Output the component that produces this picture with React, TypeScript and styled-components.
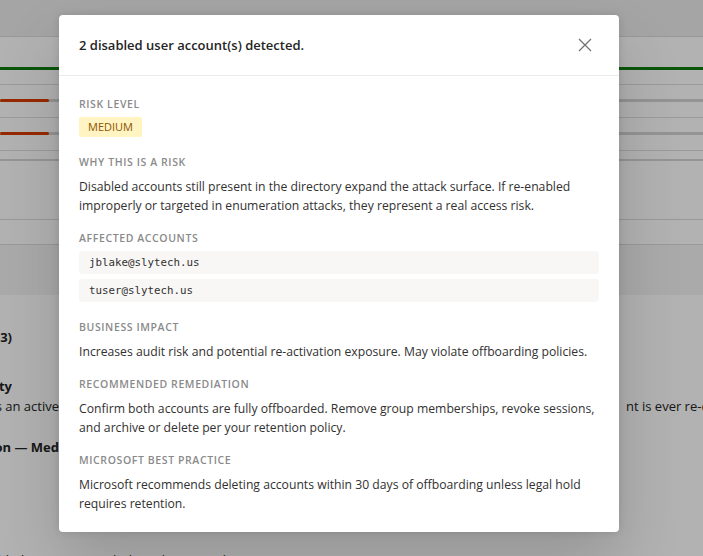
import styled, { createGlobalStyle } from 'styled-components'

const GlobalStyle = createGlobalStyle`
    html, body {
        margin: 0;
        padding: 0;
        height: 100%;
        overflow: hidden;
    }
    body {
        font-family: "Open Sans", "Noto Sans", sans-serif;
        color: #242424;
        background: #ffffff;
    }
`

const accounts = ['jblake@slytech.us', 'tuser@slytech.us']

export default function App() {
    return (
        <>
            <GlobalStyle />
            <Page>
                <BackgroundPage />
                <Overlay>
                    <Dialog />
                </Overlay>
            </Page>
        </>
    )
}

const Page = styled.div`
    position: relative;
    width: 100%;
    height: 556px;
    overflow: hidden;
    background: #ffffff;
`

// the page behind the dialog: only scraps of it show past the dialog edges
const BackgroundPage = styled(({ className }) => {
    return (
        <div className={className}>
            <TopBar />
            <GreenRule />
            <TableHead />
            <DataRow><Track><Fill $pct={7} /></Track></DataRow>
            <DataRow><Track><Fill $pct={7} /></Track></DataRow>
            <ThickRule />
            <PlainRow $height={58} />
            <PlainRow $height={24} />
            <GreyBand />
            <Copy>
                <Line $top={32} $bold>
                    <Tail $end={12}>Disabled Accounts (3)</Tail>
                </Line>
                <Line $top={29} $bold>
                    <Tail $end={12}>Security</Tail>
                </Line>
                <Line $top={0}>
                    <Tail $end={59}>Each stale account is an active</Tail>
                    <span />
                    <Head>nt is ever re-enabled</Head>
                </Line>
                <Line $top={21} $bold>
                    <Tail $end={59}>Recommendation — Med</Tail>
                </Line>
                <Line $top={93}>
                    <Tail $end={250}>Review disabled accounts regularly and remove them</Tail>
                </Line>
            </Copy>
        </div>
    )
})`
    display: flex;
    flex-direction: column;
`

const TopBar = styled.div`
    height: 36px;
    background: #ececec;
    border-bottom: 1px solid #dcdcdc;
`

const GreenRule = styled.div`
    margin-top: 30px;
    height: 3px;
    background: #107c10;
`

const TableHead = styled.div`
    height: 14px;
    border-bottom: 1px solid #dedede;
`

const DataRow = styled.div`
    height: 33px;
    padding-top: 14px;
    box-sizing: border-box;
    border-bottom: 1px solid #dedede;
`

const Track = styled.div`
    height: 3px;
    background: #d4d4d4;
`

const Fill = styled.div<{ $pct: number }>`
    width: ${p => p.$pct}%;
    height: 100%;
    background: #d83b01;
    border-radius: 2px;
`

const ThickRule = styled.div`
    margin-top: 8px;
    height: 2px;
    background: #d6d6d6;
`

const PlainRow = styled.div<{ $height: number }>`
    height: ${p => p.$height}px;
    border-bottom: 1px solid #dcdcdc;
`

const GreyBand = styled.div`
    height: 50px;
    background: #f4f4f4;
`

const Copy = styled.div`
    display: flex;
    flex-direction: column;
    font-size: 13px;
    line-height: 20px;
    color: #242424;
`

const Line = styled.div<{ $top: number; $bold?: boolean }>`
    display: grid;
    grid-template-columns: 59px 1fr 77px;
    margin-top: ${p => p.$top}px;
    font-weight: ${p => (p.$bold ? 700 : 400)};
    white-space: nowrap;
    height: 20px;
`

const Tail = styled.div<{ $end: number }>`
    width: ${p => p.$end}px;
    display: flex;
    justify-content: flex-end;
    overflow: hidden;
`

const Head = styled.div`
    overflow: hidden;
`

const Overlay = styled.div`
    position: absolute;
    inset: 0;
    background: rgba(0, 0, 0, 0.3);
    display: flex;
    align-items: flex-start;
    padding: 15px 0 0 59px;
`

const Dialog = styled(({ className }) => {
    return (
        <div className={className}>
            <DialogHeader>
                <Title>2 disabled user account(s) detected.</Title>
                <CloseButton aria-label="Close">
                    <svg width="14" height="14" viewBox="0 0 14 14">
                        <path d="M1 1 L13 13 M13 1 L1 13" stroke="#6f6f6f" strokeWidth="1.2" fill="none" />
                    </svg>
                </CloseButton>
            </DialogHeader>
            <DialogBody>
                <Section>
                    <Label>Risk level</Label>
                    <Badge>MEDIUM</Badge>
                </Section>
                <Section>
                    <Label>Why this is a risk</Label>
                    <Para>
                        Disabled accounts still present in the directory expand the attack surface. If re-enabled
                        improperly or targeted in enumeration attacks, they represent a real access risk.
                    </Para>
                </Section>
                <Section>
                    <Label>Affected accounts</Label>
                    <AccountList>
                        {accounts.map(a => (
                            <Account key={a}>{a}</Account>
                        ))}
                    </AccountList>
                </Section>
                <Section>
                    <Label>Business impact</Label>
                    <Para>Increases audit risk and potential re-activation exposure. May violate offboarding policies.</Para>
                </Section>
                <Section>
                    <Label>Recommended remediation</Label>
                    <Para>
                        Confirm both accounts are fully offboarded. Remove group memberships, revoke sessions,
                        and archive or delete per your retention policy.
                    </Para>
                </Section>
                <Section>
                    <Label>Microsoft best practice</Label>
                    <Para>
                        Microsoft recommends deleting accounts within 30 days of offboarding unless legal hold
                        requires retention.
                    </Para>
                </Section>
            </DialogBody>
        </div>
    )
})`
    width: 560px;
    background: #ffffff;
    border-radius: 4px;
    box-shadow: 0 0 8px rgba(0, 0, 0, 0.12), 0 32px 64px rgba(0, 0, 0, 0.16);
    display: flex;
    flex-direction: column;
`

const DialogHeader = styled.div`
    display: flex;
    align-items: center;
    justify-content: space-between;
    padding: 20px 27px 20px 20px;
    border-bottom: 1px solid #ebebeb;
`

const Title = styled.h2`
    margin: 0;
    font-size: 13px;
    line-height: 20px;
    font-weight: 600;
    color: #242424;
`

const CloseButton = styled.button`
    display: flex;
    padding: 0;
    border: none;
    background: transparent;
    cursor: pointer;
`

const DialogBody = styled.div`
    display: flex;
    flex-direction: column;
    gap: 15px;
    padding: 20px 20px 19px;
`

const Section = styled.div`
    display: flex;
    flex-direction: column;
    align-items: flex-start;
`

const Label = styled.div`
    font-size: 10.5px;
    line-height: 16px;
    font-weight: 600;
    letter-spacing: 0.6px;
    text-transform: uppercase;
    color: #8a8a8a;
    margin-bottom: 5px;
`

const Badge = styled.span`
    display: inline-block;
    margin-bottom: 2px;
    padding: 0 9px;
    height: 20px;
    line-height: 20px;
    font-size: 11px;
    font-weight: 500;
    color: #8a5300;
    background: #fff4c2;
    border-radius: 2px;
`

const Para = styled.p`
    margin: 2px 0 0;
    font-size: 12.2px;
    line-height: 19px;
    color: #323130;
`

const AccountList = styled.div`
    align-self: stretch;
    display: flex;
    flex-direction: column;
    gap: 5px;
    margin-bottom: 2px;
`

const Account = styled.div`
    height: 23px;
    line-height: 23px;
    padding: 0 10px;
    font-family: "DejaVu Sans Mono", "Liberation Mono", monospace;
    font-size: 10.8px;
    color: #323130;
    background: #f8f7f6;
    border-radius: 3px;
`
